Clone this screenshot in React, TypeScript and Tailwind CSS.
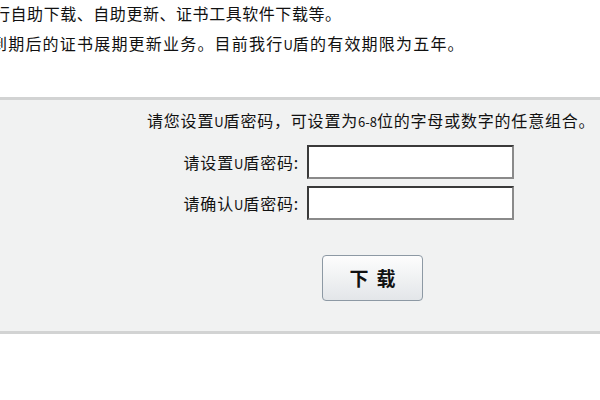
export default function App() {
  return (
    <div
      className="h-[400px] w-[600px] overflow-hidden bg-white text-[#111]"
      style={{ fontFamily: '"Noto Sans CJK SC", "Noto Sans", sans-serif' }}
    >
      <div className="-ml-[6px] -mt-[2px] whitespace-nowrap text-[16px] leading-[30px]">
        <p className="tracking-[0.55px]">行自助下载、自助更新、证书工具软件下载等。</p>
        <p className="-ml-[3px] tracking-[1.2px]">
          到期后的证书展期更新业务。目前我行<Latin>U</Latin>盾的有效期限为五年。
        </p>
      </div>

      <div className="mt-[39px] border-y-[3px] border-[#d2d3d3] bg-[#f1f2f2]">
        <div className="h-[231px]">
          <p className="pl-[147px] pt-[9px] text-[16px] leading-[22px] tracking-[0.8px] whitespace-nowrap">
            请您设置<Latin>U</Latin>盾密码，可设置为<Latin>6-8</Latin>位的字母或数字的任意组合。
          </p>
          <div className="mt-[14px] flex flex-col gap-[7px]">
            <Row label="请设置" />
            <Row label="请确认" />
          </div>
          <div className="mt-[35px] pl-[322px]">
            <button className="flex h-[46px] w-[101px] items-center justify-center rounded-[4px] border border-[#8d99a4] bg-gradient-to-b from-[#fdfdfd] to-[#e3e6e9] text-[19px] font-bold tracking-[8px] text-[#111]">
              <span className="pl-[8px]">下载</span>
            </button>
          </div>
        </div>
      </div>
    </div>
  );
}

function Latin({ children }: { children: string }) {
  return <span className="text-[13px] leading-none tracking-normal">{children}</span>;
}

function Row({ label }: { label: string }) {
  return (
    <div className="flex items-center">
      <span className="w-[302px] pr-[3px] text-right text-[16px] tracking-[0.8px] whitespace-nowrap">
        {label}
        <Latin>U</Latin>盾密码:
      </span>
      <input
        type="password"
        className="ml-[5px] h-[34px] w-[207px] border-2 border-t-[#3a3a3a] border-l-[#3a3a3a] border-r-[#8a8a8a] border-b-[#8a8a8a] bg-white outline-none"
      />
    </div>
  );
}
